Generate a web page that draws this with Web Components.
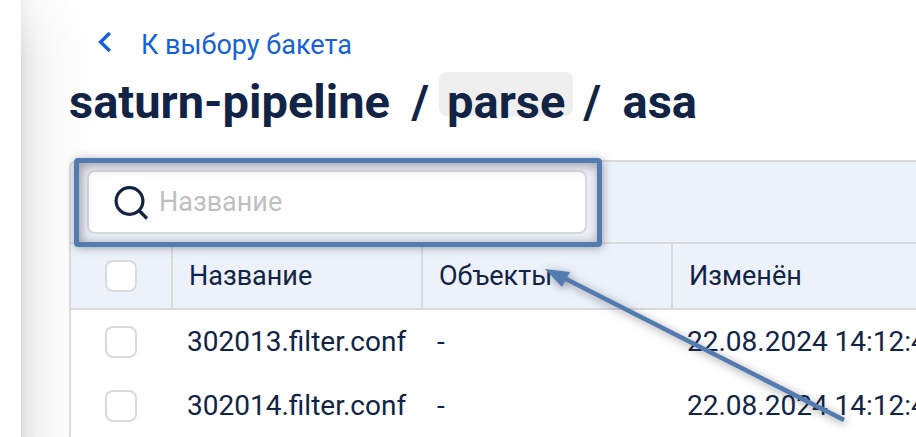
<!DOCTYPE html>
<html lang="ru">
<head>
<meta charset="UTF-8">
<title>saturn-pipeline / parse / asa</title>
<style>
html {
  background: #fff;
}
body {
  margin: 0;
  overflow: hidden;
  color: #122445;
  font-family: Roboto, "Liberation Sans", sans-serif;
  font-size: 27px;
  line-height: 34px;
}
</style>
</head>
<body>
<bucket-page>
  <back-link slot="back" href="#buckets">К выбору бакета</back-link>
  <bucket-path slot="path" path="saturn-pipeline/parse/asa" active="parse"></bucket-path>
  <object-table>
    <search-box slot="toolbar" placeholder="Название"></search-box>
  </object-table>
  <pointer-arrow slot="note"></pointer-arrow>
</bucket-page>

<template id="bucket-page">
  <style>
    :host {
      display: block;
      position: relative;
      margin-left: 21px;
      background:
        linear-gradient(180deg, rgba(255, 255, 255, .6), rgba(255, 255, 255, 0) 60px),
        linear-gradient(90deg, #dcdcdc 0, #e8e8e8 6px, #f2f2f2 16px, #f8f8f8 30px, #fcfcfc 50px, #fff 80px);
    }
    main {
      display: flex;
      flex-direction: column;
      min-height: 100vh;
      padding: 28px 0 0 48px;
      box-sizing: border-box;
      overflow: hidden;
    }
    header {
      display: flex;
      flex-direction: column;
      gap: 10px;
      padding-bottom: 28px;
    }
  </style>
  <main>
    <header>
      <slot name="back"></slot>
      <slot name="path"></slot>
    </header>
    <slot></slot>
  </main>
  <slot name="note"></slot>
</template>

<template id="back-link">
  <style>
    :host {
      display: block;
    }
    a {
      display: flex;
      align-items: center;
      gap: 28px;
      width: fit-content;
      padding-left: 28px;
      color: #1661d8;
      text-decoration: none;
    }
    svg {
      display: block;
      margin-bottom: 6px;
    }
  </style>
  <a>
    <svg width="16" height="22" viewBox="0 0 16 22" fill="none" stroke="currentColor" stroke-width="3.4" aria-hidden="true">
      <path d="M12.8 2 3.6 11l9.2 9"/>
    </svg>
    <slot></slot>
  </a>
</template>

<template id="bucket-path">
  <style>
    :host {
      display: block;
    }
    h1 {
      display: flex;
      margin: 0;
      height: 60px;
      font-size: 47px;
      line-height: 60px;
      font-weight: 700;
      white-space: pre;
    }
    button {
      height: 44px;
      margin: 0;
      padding: 0 8px;
      border: 0;
      border-radius: 8px;
      background: none;
      color: inherit;
      font: inherit;
    }
    button.active {
      background: #efefef;
    }
    .sep {
      padding: 0 10px;
    }
  </style>
  <h1></h1>
</template>

<template id="search-box">
  <style>
    :host {
      display: block;
      position: relative;
      width: 500px;
    }
    label {
      display: flex;
      align-items: center;
      gap: 10px;
      height: 64px;
      padding: 0 24px;
      box-sizing: border-box;
      border: 2px solid #dadada;
      border-radius: 8px;
      background: #fff;
    }
    svg {
      flex: none;
    }
    input {
      flex: 1;
      min-width: 0;
      padding: 0;
      border: 0;
      outline: 0;
      background: none;
      color: inherit;
      font: inherit;
    }
    input::placeholder {
      color: #bfbfbf;
      opacity: 1;
    }
    /* highlight frame over the toolbar */
    .frame {
      position: absolute;
      inset: -12px -15px -13px -13px;
      border: 5px solid #527bb0;
      border-radius: 4px;
      box-shadow: 1px 1px 8px rgba(60, 60, 70, .45), inset 2px 2px 12px rgba(60, 60, 70, .5);
      pointer-events: none;
    }
  </style>
  <label>
    <svg width="36" height="36" viewBox="0 0 36 36" fill="none" stroke="#122445" stroke-width="3.2" aria-hidden="true">
      <circle cx="16.5" cy="17" r="13.4"/>
      <path d="m26 26.5 8 8"/>
    </svg>
    <input type="text">
  </label>
  <div class="frame"></div>
</template>

<template id="object-table">
  <style>
    :host {
      display: block;
      min-width: 1100px;
      border: 2px solid #dadada;
      border-bottom: 0;
      border-radius: 8px 8px 0 0;
      background: #fff;
    }
    .toolbar {
      padding: 8px 16px;
      border-bottom: 2px solid #dadada;
      border-radius: 6px 6px 0 0;
      background: #edf1fa;
    }
    table {
      width: 100%;
      table-layout: fixed;
      border-collapse: separate;
      border-spacing: 0;
    }
    th, td {
      height: 64px;
      padding: 0 16px;
      box-sizing: border-box;
      text-align: left;
      font-weight: 400;
      white-space: nowrap;
    }
    td {
      padding: 0 14px;
      font-size: 28px;
    }
    th {
      height: 66px;
      border-right: 2px solid #dadada;
      border-bottom: 2px solid #dadada;
      background: #edf1fa;
    }
    th:last-child {
      border-right: 0;
    }
    .check {
      width: 102px;
      padding: 0 34px;
    }
    .name, .count {
      width: 250px;
    }
    input {
      display: block;
      appearance: none;
      width: 32px;
      height: 32px;
      margin: 0;
      border: 2px solid #dadada;
      border-radius: 8px;
      background: #fff;
    }
  </style>
  <div class="toolbar"><slot name="toolbar"></slot></div>
  <table>
    <thead>
      <tr>
        <th class="check"><input type="checkbox" aria-label="Выбрать все"></th>
        <th class="name">Название</th>
        <th class="count">Объекты</th>
        <th>Изменён</th>
      </tr>
    </thead>
    <tbody></tbody>
  </table>
</template>

<template id="pointer-arrow">
  <style>
    :host {
      position: absolute;
      left: 514px;
      top: 259px;
      pointer-events: none;
    }
    svg {
      display: block;
      overflow: visible;
      filter: drop-shadow(1px 2px 4px rgba(50, 50, 60, .5));
    }
  </style>
  <svg width="320" height="172" viewBox="0 0 320 172" aria-hidden="true">
    <path d="M29 19 309 161" stroke="#527bb0" stroke-width="4.6"/>
    <path d="m10 10 25 3-8 15z" fill="#527bb0"/>
  </svg>
</template>

<script>
class BaseElement extends HTMLElement {
  constructor() {
    super();
    this.attachShadow({ mode: "open" });
    const template = document.getElementById(this.localName);
    this.shadowRoot.appendChild(template.content.cloneNode(true));
  }
}

class BucketPage extends BaseElement {}

class BackLink extends BaseElement {
  connectedCallback() {
    this.shadowRoot.querySelector("a").href = this.getAttribute("href");
  }
}

class BucketPath extends BaseElement {
  connectedCallback() {
    const title = this.shadowRoot.querySelector("h1");
    title.replaceChildren();

    this.getAttribute("path").split("/").forEach((part, i, parts) => {
      if (i > 0) {
        const sep = document.createElement("span");
        sep.className = "sep";
        sep.textContent = "/";
        title.appendChild(sep);
      }
      // the first part is the bucket, the last one the current folder
      if (i === 0 || i === parts.length - 1) {
        const text = document.createElement("span");
        text.textContent = i === 0 ? part + " " : " " + part;
        title.appendChild(text);
        return;
      }
      const button = document.createElement("button");
      button.type = "button";
      button.textContent = part;
      button.classList.toggle("active", part === this.getAttribute("active"));
      title.appendChild(button);
    });
  }
}

class SearchBox extends BaseElement {
  connectedCallback() {
    const input = this.shadowRoot.querySelector("input");
    input.placeholder = this.getAttribute("placeholder");
    input.setAttribute("aria-label", input.placeholder);
  }
}

const objects = [
  { name: "302013.filter.conf", count: "-", changed: "22.08.2024 14:12:43" },
  { name: "302014.filter.conf", count: "-", changed: "22.08.2024 14:12:43" },
];

class ObjectTable extends BaseElement {
  connectedCallback() {
    const body = this.shadowRoot.querySelector("tbody");
    body.replaceChildren();

    for (const item of objects) {
      const row = body.insertRow();
      const check = document.createElement("input");
      check.type = "checkbox";
      check.setAttribute("aria-label", item.name);
      const cell = row.insertCell();
      cell.className = "check";
      cell.appendChild(check);
      row.insertCell().textContent = item.name;
      row.insertCell().textContent = item.count;
      row.insertCell().textContent = item.changed;
    }
  }
}

class PointerArrow extends BaseElement {}

customElements.define("bucket-page", BucketPage);
customElements.define("back-link", BackLink);
customElements.define("bucket-path", BucketPath);
customElements.define("search-box", SearchBox);
customElements.define("object-table", ObjectTable);
customElements.define("pointer-arrow", PointerArrow);
</script>
</body>
</html>
